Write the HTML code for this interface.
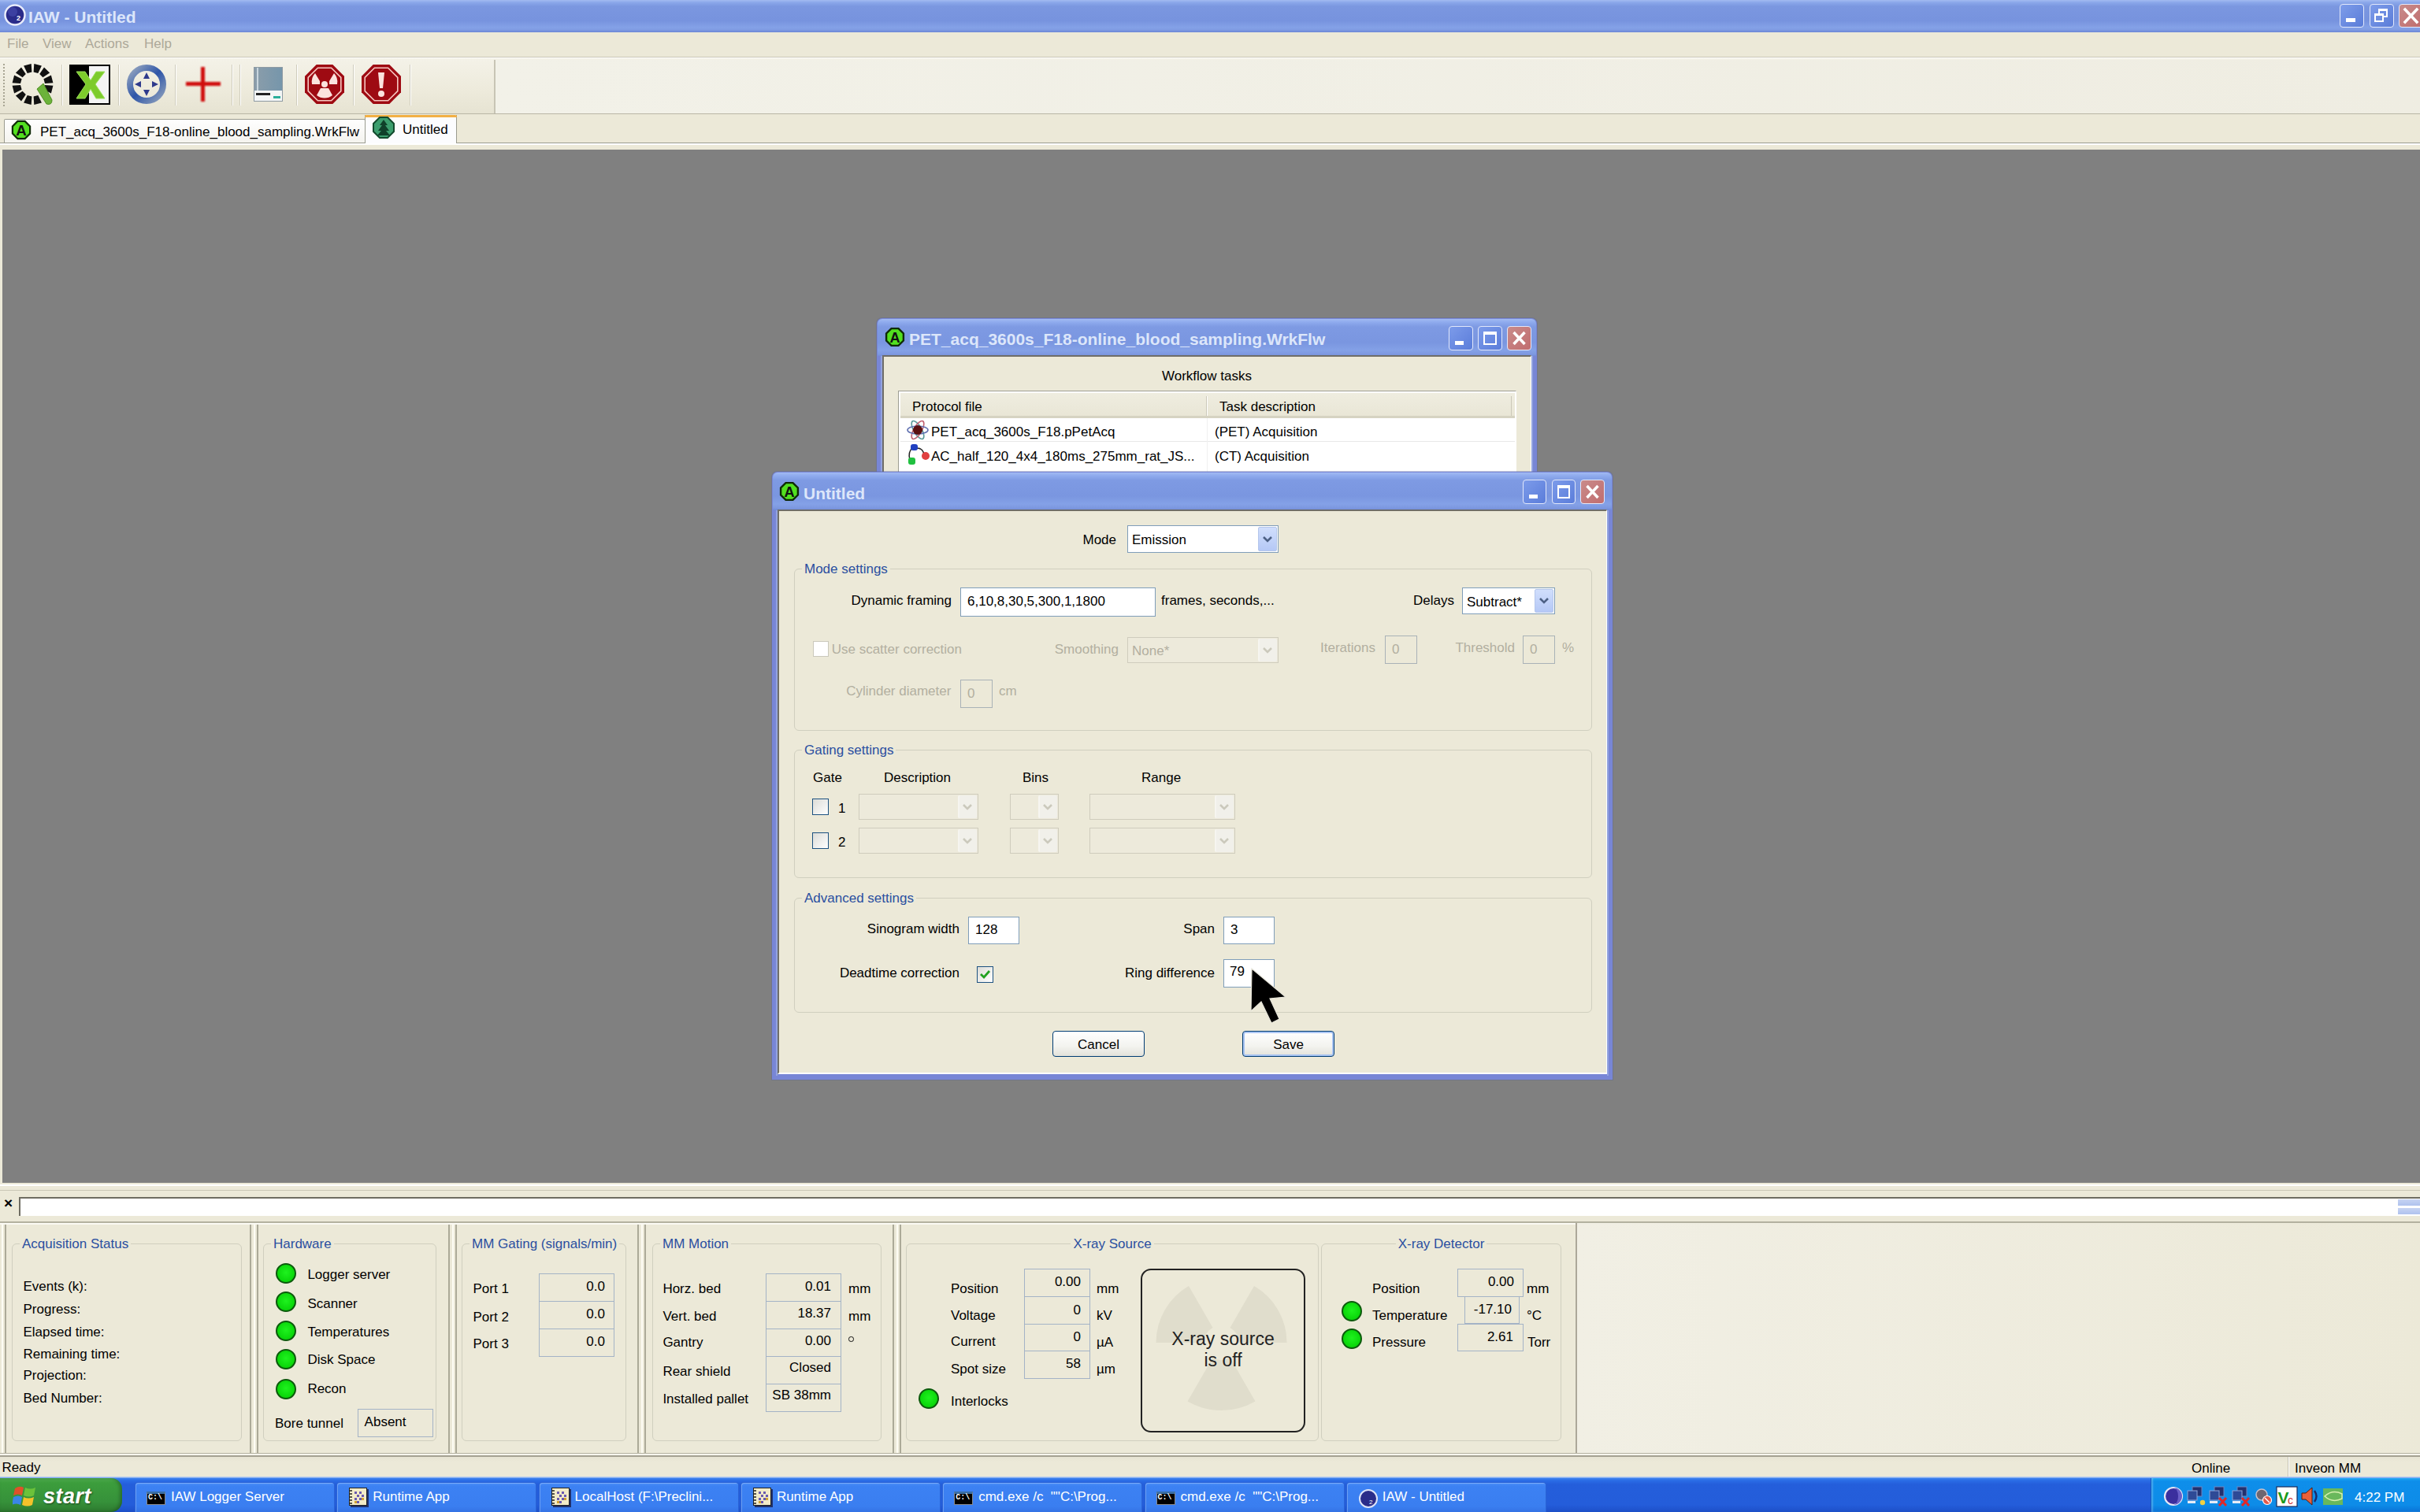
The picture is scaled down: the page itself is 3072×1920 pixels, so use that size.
<!DOCTYPE html><html><head><meta charset="utf-8"><title>IAW - Untitled</title><style>
html,body{margin:0;padding:0;width:3072px;height:1920px;overflow:hidden;background:#ECE9D8;}
body{position:relative;font-family:"Liberation Sans",sans-serif;}
.a{position:absolute;box-sizing:border-box;}
.t{position:absolute;white-space:nowrap;}
svg{position:absolute;}
</style></head><body>
<div class="a" style="left:0px;top:0px;width:3072px;height:41px;background:linear-gradient(#A3BBF1 0px,#8BA8EA 3px,#7B97E0 8px,#7793DE 26px,#84A1E7 35px,#7F9BE2 38px,#6B86D6 41px);"></div>
<svg style="left:4px;top:4px" width="30" height="30" viewBox="0 0 30 30"><circle cx="15" cy="15" r="12.5" fill="#2A2C8A" stroke="#E8ECFA" stroke-width="2.5"/><circle cx="12" cy="11" r="6" fill="#4A4FB0" opacity=".6"/><text x="17" y="22" font-size="9" fill="#fff" font-family="Liberation Sans" font-weight="bold">2</text></svg>
<div class="t" style="top:10.62px;font-size:21px;line-height:21px;color:#DCE6FA;font-weight:bold;left:36px;">IAW - Untitled</div>
<div class="a" style="left:2970px;top:5px;width:31px;height:30px;background:linear-gradient(135deg,#7E9DEA,#5A7CD8);border:1.5px solid #E4EAFB;border-radius:4px;"></div>
<div class="a" style="left:2978px;top:23px;width:12px;height:5px;background:#fff;"></div>
<div class="a" style="left:3008px;top:5px;width:31px;height:30px;background:linear-gradient(135deg,#7E9DEA,#5A7CD8);border:1.5px solid #E4EAFB;border-radius:4px;"></div>
<div class="a" style="left:3019px;top:11px;width:12px;height:11px;border:2px solid #fff;border-top-width:3px;"></div>
<div class="a" style="left:3014px;top:17px;width:12px;height:11px;border:2px solid #fff;border-top-width:3px;background:#6F8FE0;"></div>
<div class="a" style="left:3045px;top:5px;width:31px;height:30px;background:linear-gradient(135deg,#C88C8C,#C06C6C);border:1.5px solid #E4EAFB;border-radius:4px;"></div>
<svg style="left:3045px;top:5px" width="31" height="30" viewBox="0 0 31 30"><path d="M8 7 L23 23 M23 7 L8 23" stroke="#fff" stroke-width="3.5" stroke-linecap="square"/></svg>
<div class="a" style="left:0px;top:41px;width:3072px;height:33px;background:#ECE9D8;"></div>
<div class="t" style="top:46.61px;font-size:17px;line-height:17px;color:#ACA899;left:9px;">File</div>
<div class="t" style="top:46.61px;font-size:17px;line-height:17px;color:#ACA899;left:54px;">View</div>
<div class="t" style="top:46.61px;font-size:17px;line-height:17px;color:#ACA899;left:108px;">Actions</div>
<div class="t" style="top:46.61px;font-size:17px;line-height:17px;color:#ACA899;left:183px;">Help</div>
<div class="a" style="left:0px;top:72px;width:3072px;height:2px;background:#C9C6B6;border-bottom:1px solid #fff;"></div>
<div class="a" style="left:0px;top:74px;width:3072px;height:71px;background:linear-gradient(#F4F2E8,#EDEADB 60%,#E6E3D2);"></div>
<div class="a" style="left:628px;top:76px;width:2444px;height:68px;background:linear-gradient(90deg,#F2F1E8,#EFEDE2);"></div>
<div class="a" style="left:627px;top:76px;width:2px;height:68px;background:#C8C5B5;"></div>
<div class="a" style="left:4px;top:81px;width:2px;height:2px;background:#A8A593;"></div>
<div class="a" style="left:4px;top:85px;width:2px;height:2px;background:#A8A593;"></div>
<div class="a" style="left:4px;top:89px;width:2px;height:2px;background:#A8A593;"></div>
<div class="a" style="left:4px;top:93px;width:2px;height:2px;background:#A8A593;"></div>
<div class="a" style="left:4px;top:97px;width:2px;height:2px;background:#A8A593;"></div>
<div class="a" style="left:4px;top:101px;width:2px;height:2px;background:#A8A593;"></div>
<div class="a" style="left:4px;top:105px;width:2px;height:2px;background:#A8A593;"></div>
<div class="a" style="left:4px;top:109px;width:2px;height:2px;background:#A8A593;"></div>
<div class="a" style="left:4px;top:113px;width:2px;height:2px;background:#A8A593;"></div>
<div class="a" style="left:4px;top:117px;width:2px;height:2px;background:#A8A593;"></div>
<div class="a" style="left:4px;top:121px;width:2px;height:2px;background:#A8A593;"></div>
<div class="a" style="left:4px;top:125px;width:2px;height:2px;background:#A8A593;"></div>
<div class="a" style="left:4px;top:129px;width:2px;height:2px;background:#A8A593;"></div>
<div class="a" style="left:4px;top:133px;width:2px;height:2px;background:#A8A593;"></div>
<div class="a" style="left:78px;top:82px;width:1px;height:52px;background:#CFCCBC;"></div>
<div class="a" style="left:79px;top:82px;width:1px;height:52px;background:#fff;"></div>
<div class="a" style="left:150px;top:82px;width:1px;height:52px;background:#CFCCBC;"></div>
<div class="a" style="left:151px;top:82px;width:1px;height:52px;background:#fff;"></div>
<div class="a" style="left:222px;top:82px;width:1px;height:52px;background:#CFCCBC;"></div>
<div class="a" style="left:223px;top:82px;width:1px;height:52px;background:#fff;"></div>
<div class="a" style="left:294px;top:82px;width:1px;height:52px;background:#CFCCBC;"></div>
<div class="a" style="left:295px;top:82px;width:1px;height:52px;background:#fff;"></div>
<div class="a" style="left:304px;top:82px;width:1px;height:52px;background:#CFCCBC;"></div>
<div class="a" style="left:305px;top:82px;width:1px;height:52px;background:#fff;"></div>
<div class="a" style="left:376px;top:82px;width:1px;height:52px;background:#CFCCBC;"></div>
<div class="a" style="left:377px;top:82px;width:1px;height:52px;background:#fff;"></div>
<div class="a" style="left:448px;top:82px;width:1px;height:52px;background:#CFCCBC;"></div>
<div class="a" style="left:449px;top:82px;width:1px;height:52px;background:#fff;"></div>
<div class="a" style="left:520px;top:82px;width:1px;height:52px;background:#CFCCBC;"></div>
<div class="a" style="left:521px;top:82px;width:1px;height:52px;background:#fff;"></div>
<div class="a" style="left:0px;top:144px;width:3072px;height:1.5px;background:#B9B6A5;"></div>
<svg style="left:0;top:0" width="80" height="145"><path d="M43.3 81.1 L52.9 83.6 L48.3 93.1 L42.6 91.5Z M56.0 85.4 L63.1 92.5 L54.4 98.3 L50.2 94.1Z M64.9 95.6 L67.4 105.2 L57.0 105.9 L55.4 100.2Z M67.4 108.8 L64.9 118.4 L55.4 113.8 L57.0 108.1Z M52.9 130.4 L43.3 132.9 L42.6 122.5 L48.3 120.9Z M39.7 132.9 L30.1 130.4 L34.7 120.9 L40.4 122.5Z M27.0 128.6 L19.9 121.5 L28.6 115.7 L32.8 119.9Z M18.1 118.4 L15.6 108.8 L26.0 108.1 L27.6 113.8Z M15.6 105.2 L18.1 95.6 L27.6 100.2 L26.0 105.9Z M19.9 92.5 L27.0 85.4 L32.8 94.1 L28.6 98.3Z M30.1 83.6 L39.7 81.1 L40.4 91.5 L34.7 93.1Z" fill="#111"/><path d="M47 113 L55 106 L66 127 Q66 134 59 132 Z" fill="#6CB33A" stroke="#4E8E22" stroke-width="1"/></svg>
<div class="a" style="left:88px;top:82px;width:52px;height:51px;background:linear-gradient(90deg,#000 0,#000 48%,#F4F4F4 48%);border:2px solid #000;"></div>
<svg style="left:88px;top:82px" width="52" height="51"><path d="M9 9 L20 9 L27 20 L34 9 L45 9 L33 25 L45 43 L34 43 L27 31 L20 43 L9 43 L21 25 Z" fill="#7DCB2C" stroke="#9BE05A" stroke-width="1"/></svg>
<svg style="left:158px;top:80px" width="56" height="56"><defs><linearGradient id="cg" x1="0" y1="0" x2="1" y2="1"><stop offset="0" stop-color="#9AA9C0"/><stop offset=".5" stop-color="#2E55A8"/><stop offset="1" stop-color="#8EA0BC"/></linearGradient></defs><circle cx="28" cy="27" r="21" fill="none" stroke="url(#cg)" stroke-width="8"/><path d="M28 12 L32 20 L24 20 Z M28 42 L32 34 L24 34 Z M13 27 L21 23 L21 31 Z M43 27 L35 23 L35 31 Z" fill="#2E3A8C"/></svg>
<svg style="left:232px;top:82px" width="52" height="50"><defs><filter id="bl"><feGaussianBlur stdDeviation="1.2"/></filter></defs><g filter="url(#bl)"><rect x="4" y="22" width="44" height="5" fill="#D01010"/><rect x="23" y="3" width="5" height="44" fill="#D01010"/></g></svg>
<div class="a" style="left:322px;top:85px;width:37px;height:44px;background:linear-gradient(90deg,#8B9DAA,#7696AB);border:1px solid #8E9AA3;"></div>
<div class="a" style="left:326px;top:86px;width:2px;height:30px;background:#C9D6DE;"></div>
<div class="a" style="left:323px;top:115px;width:35px;height:13px;background:#F4F6F6;"></div>
<div class="a" style="left:325px;top:118px;width:18px;height:3px;background:#222;"></div>
<div class="a" style="left:347px;top:122px;width:9px;height:3px;background:#2AAE9A;"></div>
<svg style="left:386px;top:81px" width="52" height="52"><polygon points="51.0,36.3 36.3,51.0 15.7,51.0 1.0,36.3 1.0,15.7 15.7,1.0 36.3,1.0 51.0,15.7" fill="#9E0A12"/><polygon points="46.8,34.6 34.6,46.8 17.4,46.8 5.2,34.6 5.2,17.4 17.4,5.2 34.6,5.2 46.8,17.4" fill="none" stroke="#F6C6C0" stroke-width="1.6"/><circle cx="26" cy="26" r="4" fill="#FBE3DE"/><path d="M26 26 m-6 -4 L14 12 A16 16 0 0 0 10 26 L20 26 Z" fill="#FBE3DE"/><path d="M32 22 L38 12 A16 16 0 0 1 42 26 L32 26 Z" fill="#FBE3DE"/><path d="M21 31 L16 40 A16 16 0 0 0 36 40 L31 31 Z" fill="#FBE3DE"/></svg>
<svg style="left:458px;top:81px" width="52" height="52"><polygon points="51.0,36.3 36.3,51.0 15.7,51.0 1.0,36.3 1.0,15.7 15.7,1.0 36.3,1.0 51.0,15.7" fill="#9E0A12"/><polygon points="46.8,34.6 34.6,46.8 17.4,46.8 5.2,34.6 5.2,17.4 17.4,5.2 34.6,5.2 46.8,17.4" fill="none" stroke="#F6C6C0" stroke-width="1.6"/><path d="M22 11 L30 11 L28 31 L24 31 Z" fill="#FBE3DE"/><circle cx="26" cy="38" r="4" fill="#FBE3DE"/></svg>
<div class="a" style="left:0px;top:145px;width:3072px;height:46px;background:#ECE9D8;"></div>
<div class="a" style="left:5px;top:151px;width:459px;height:31px;background:linear-gradient(#FEFEFE,#F4F3EE);border:1px solid #9A9B8F;border-bottom:none;border-radius:2px 2px 0 0;"></div>
<div class="a" style="left:463px;top:146px;width:117px;height:37px;background:#FCFCFE;border:1px solid #9A9B8F;border-bottom:none;border-top:none;"></div>
<div class="a" style="left:463px;top:146px;width:117px;height:3px;background:#F2B045;border-radius:2px 2px 0 0;"></div>
<div class="a" style="left:0px;top:181px;width:463px;height:1px;background:#9A9B8F;"></div>
<div class="a" style="left:580px;top:181px;width:2492px;height:1px;background:#9A9B8F;"></div>
<div class="a" style="left:0px;top:182px;width:3072px;height:2px;background:#FFFFFF;"></div>
<div class="a" style="left:0px;top:184px;width:3072px;height:7px;background:#ECE9D8;"></div>
<svg style="left:14px;top:152px" width="26" height="26"><polygon points="24.1,17.6 17.6,24.1 8.4,24.1 1.9,17.6 1.9,8.4 8.4,1.9 17.6,1.9 24.1,8.4" fill="#52E020" stroke="#0E2A06" stroke-width="2.2"/><text x="13.0" y="20.0" font-size="18.7" font-weight="bold" text-anchor="middle" font-family="Liberation Sans" fill="#111">A</text></svg>
<div class="t" style="top:158.61px;font-size:17px;line-height:17px;color:#000;left:51px;">PET_acq_3600s_F18-online_blood_sampling.WrkFlw</div>
<svg style="left:473px;top:148px" width="28" height="28"><polygon points="9,1 19,1 27,9 27,19 19,27 9,27 1,19 1,9" fill="#3C9E6E" stroke="#134A2E" stroke-width="2"/><path d="M14 4 L19 11 L16 11 L21 18 L17 18 L22 24 L6 24 L11 18 L7 18 L12 11 L9 11 Z" fill="#10402A"/></svg>
<div class="t" style="top:155.61px;font-size:17px;line-height:17px;color:#000;left:511px;">Untitled</div>
<div class="a" style="left:3px;top:190px;width:3069px;height:1312px;background:#808080;"></div>
<div class="a" style="left:1113px;top:404px;width:838px;height:420px;background:#7886D6;border-radius:7px 7px 0 0;box-shadow:0 0 0 1px rgba(90,100,150,.35);"></div>
<div class="a" style="left:1114px;top:405px;width:836px;height:47px;border-radius:6px 6px 0 0;background:linear-gradient(#A2BAF2 0px,#8FABEE 4px,#7E9AE3 10px,#7A96E0 30px,#84A1E7 40px,#7D98E0 45px,#6E88D6 48px);"></div>
<div class="a" style="left:1118px;top:452px;width:2px;height:367px;background:#93A3DF;"></div>
<div class="a" style="left:1944px;top:452px;width:2px;height:367px;background:#93A3DF;"></div>
<div class="a" style="left:1120px;top:451px;width:824px;height:366px;background:#ECE9D8;border-top:2px solid #6F6E68;border-left:2px solid #6F6E68;border-right:1px solid #FFFFFF;border-bottom:2px solid #FFFFFF;"></div>
<svg style="left:1123px;top:415px" width="26" height="26"><polygon points="23.9,17.5 17.5,23.9 8.5,23.9 2.1,17.5 2.1,8.5 8.5,2.1 17.5,2.1 23.9,8.5" fill="#52E020" stroke="#0E2A06" stroke-width="2.4"/><text x="13.0" y="19.8" font-size="18.2" font-weight="bold" text-anchor="middle" font-family="Liberation Sans" fill="#111">A</text></svg>
<div class="t" style="top:420.22px;font-size:21px;line-height:21px;color:#DCE6FA;font-weight:bold;left:1154px;">PET_acq_3600s_F18-online_blood_sampling.WrkFlw</div>
<div class="a" style="left:1839px;top:414px;width:31px;height:31px;background:linear-gradient(135deg,#7C9BEA,#5B7DDA);border:1.5px solid #E2E8FA;border-radius:4px;"></div>
<div class="a" style="left:1847px;top:433px;width:11px;height:5px;background:#fff;"></div>
<div class="a" style="left:1876px;top:414px;width:31px;height:31px;background:linear-gradient(135deg,#7C9BEA,#5B7DDA);border:1.5px solid #E2E8FA;border-radius:4px;"></div>
<div class="a" style="left:1883px;top:421px;width:17px;height:17px;border:2px solid #fff;border-top-width:4px;"></div>
<div class="a" style="left:1913px;top:414px;width:31px;height:31px;background:linear-gradient(135deg,#C98B8A,#C16D6F);border:1.5px solid #E2E8FA;border-radius:4px;"></div>
<svg style="left:1913px;top:414px" width="31" height="31" viewBox="0 0 31 31"><path d="M8.5 8 L22.5 23 M22.5 8 L8.5 23" stroke="#fff" stroke-width="3.5"/></svg>
<div class="t" style="top:468.61px;font-size:17px;line-height:17px;color:#000;left:932px;width:1200px;text-align:center;">Workflow tasks</div>
<div class="a" style="left:1140px;top:496px;width:785px;height:200px;background:#fff;border:1px solid #9D9D92;border-right-color:#fff;"></div>
<div class="a" style="left:1143px;top:499px;width:780px;height:32px;background:linear-gradient(#EFEDE0,#E9E6D6);border-bottom:3px solid #D6D3C2;"></div>
<div class="a" style="left:1531px;top:503px;width:1px;height:25px;background:#CBC8B8;"></div>
<div class="a" style="left:1532px;top:503px;width:1px;height:25px;background:#fff;"></div>
<div class="a" style="left:1918px;top:503px;width:1px;height:25px;background:#CBC8B8;"></div>
<div class="t" style="top:507.61px;font-size:17px;line-height:17px;color:#000;left:1158px;">Protocol file</div>
<div class="t" style="top:507.61px;font-size:17px;line-height:17px;color:#000;left:1548px;">Task description</div>
<div class="a" style="left:1143px;top:560px;width:780px;height:1px;background:#E8E8E8;"></div>
<div class="a" style="left:1532px;top:531px;width:1px;height:70px;background:#F0F0F0;"></div>
<svg style="left:1150px;top:532px" width="30" height="28"><ellipse cx="15" cy="14" rx="13" ry="5" fill="none" stroke="#5A9A9A" stroke-width="1.6" transform="rotate(60 15 14)"/><ellipse cx="15" cy="14" rx="13" ry="5" fill="none" stroke="#C06070" stroke-width="1.6" transform="rotate(-60 15 14)"/><ellipse cx="15" cy="14" rx="13" ry="5" fill="none" stroke="#6070B0" stroke-width="1.6"/><circle cx="15" cy="14" r="6" fill="#5A1010"/></svg>
<div class="t" style="top:540.11px;font-size:17px;line-height:17px;color:#000;left:1182px;">PET_acq_3600s_F18.pPetAcq</div>
<div class="t" style="top:540.11px;font-size:17px;line-height:17px;color:#000;left:1542px;">(PET) Acquisition</div>
<svg style="left:1150px;top:562px" width="32" height="30"><path d="M9 6 Q2 12 5 22" fill="none" stroke="#222" stroke-width="1.5"/><path d="M12 7 Q22 6 23 16" fill="none" stroke="#222" stroke-width="1.5"/><rect x="6" y="2" width="9" height="8" rx="3" fill="#2040C0"/><circle cx="25" cy="17" r="5" fill="#E04040"/><rect x="3" y="19" width="9" height="9" rx="3" fill="#20C040"/></svg>
<div class="t" style="top:570.61px;font-size:17px;line-height:17px;color:#000;left:1182px;">AC_half_120_4x4_180ms_275mm_rat_JS...</div>
<div class="t" style="top:570.61px;font-size:17px;line-height:17px;color:#000;left:1542px;">(CT) Acquisition</div>
<div class="a" style="left:980px;top:599px;width:1067px;height:772px;background:#7886D6;border-radius:7px 7px 0 0;box-shadow:0 0 0 1px rgba(90,100,150,.35);"></div>
<div class="a" style="left:981px;top:600px;width:1065px;height:48px;border-radius:6px 6px 0 0;background:linear-gradient(#A2BAF2 0px,#8FABEE 4px,#7E9AE3 10px,#7A96E0 30px,#84A1E7 40px,#7D98E0 45px,#6E88D6 48px);"></div>
<div class="a" style="left:985px;top:648px;width:2px;height:718px;background:#93A3DF;"></div>
<div class="a" style="left:2040px;top:648px;width:2px;height:718px;background:#93A3DF;"></div>
<div class="a" style="left:987px;top:647px;width:1053px;height:717px;background:#ECE9D8;border-top:2px solid #6F6E68;border-left:2px solid #6F6E68;border-right:1px solid #FFFFFF;border-bottom:2px solid #FFFFFF;"></div>
<svg style="left:989px;top:611px" width="26" height="26"><polygon points="23.9,17.5 17.5,23.9 8.5,23.9 2.1,17.5 2.1,8.5 8.5,2.1 17.5,2.1 23.9,8.5" fill="#52E020" stroke="#0E2A06" stroke-width="2.4"/><text x="13.0" y="19.8" font-size="18.2" font-weight="bold" text-anchor="middle" font-family="Liberation Sans" fill="#111">A</text></svg>
<div class="t" style="top:615.72px;font-size:21px;line-height:21px;color:#DCE6FA;font-weight:bold;left:1020px;">Untitled</div>
<div class="a" style="left:1933px;top:609px;width:30px;height:31px;background:linear-gradient(135deg,#7C9BEA,#5B7DDA);border:1.5px solid #E2E8FA;border-radius:4px;"></div>
<div class="a" style="left:1941px;top:628px;width:11px;height:5px;background:#fff;"></div>
<div class="a" style="left:1970px;top:609px;width:30px;height:31px;background:linear-gradient(135deg,#7C9BEA,#5B7DDA);border:1.5px solid #E2E8FA;border-radius:4px;"></div>
<div class="a" style="left:1977px;top:616px;width:16px;height:17px;border:2px solid #fff;border-top-width:4px;"></div>
<div class="a" style="left:2006px;top:609px;width:31px;height:31px;background:linear-gradient(135deg,#C98B8A,#C16D6F);border:1.5px solid #E2E8FA;border-radius:4px;"></div>
<svg style="left:2006px;top:609px" width="31" height="31" viewBox="0 0 31 31"><path d="M8.5 8 L22.5 23 M22.5 8 L8.5 23" stroke="#fff" stroke-width="3.5"/></svg>
<div class="t" style="top:676.61px;font-size:17px;line-height:17px;color:#000;right:1655px;">Mode</div>
<div class="a" style="left:1431px;top:667px;width:192px;height:35px;background:#fff;border:1px solid #7F9DB9;"></div>
<div class="a" style="left:1597px;top:669px;width:24px;height:31px;background:linear-gradient(#D0DEFC,#B5C8F6);border:1px solid #B4C6EC;border-radius:2px;"></div>
<svg style="left:1602px;top:679.5px" width="14" height="10"><path d="M2 2 L7 7 L12 2" fill="none" stroke="#4D6185" stroke-width="2.6"/></svg>
<div class="t" style="top:677.11px;font-size:17px;line-height:17px;color:#000;left:1437px;">Emission</div>
<div class="a" style="left:1008px;top:722px;width:1013px;height:206px;border:1px solid #D0CFBF;border-radius:6px;"></div>
<div class="a" style="left:1018px;top:719px;width:111.8125px;height:6px;background:#ECE9D8;"></div>
<div class="t" style="top:714.11px;font-size:17px;line-height:17px;color:#2A4FA0;left:1021px;">Mode settings</div>
<div class="t" style="top:754.01px;font-size:17px;line-height:17px;color:#000;right:1864px;">Dynamic framing</div>
<div class="a" style="left:1219px;top:746px;width:248px;height:37px;background:#fff;border:1px solid #7F9DB9;"></div>
<div class="t" style="top:755.11px;font-size:17px;line-height:17px;color:#000;left:1228px;">6,10,8,30,5,300,1,1800</div>
<div class="t" style="top:754.01px;font-size:17px;line-height:17px;color:#000;left:1474px;">frames, seconds,...</div>
<div class="t" style="top:753.61px;font-size:17px;line-height:17px;color:#000;right:1226px;">Delays</div>
<div class="a" style="left:1856px;top:746px;width:118px;height:34px;background:#fff;border:1px solid #7F9DB9;"></div>
<div class="a" style="left:1948px;top:748px;width:24px;height:30px;background:linear-gradient(#D0DEFC,#B5C8F6);border:1px solid #B4C6EC;border-radius:2px;"></div>
<svg style="left:1953px;top:758.0px" width="14" height="10"><path d="M2 2 L7 7 L12 2" fill="none" stroke="#4D6185" stroke-width="2.6"/></svg>
<div class="t" style="top:755.61px;font-size:17px;line-height:17px;color:#000;left:1862px;">Subtract*</div>
<div class="a" style="left:1032px;top:814px;width:20px;height:20px;background:#fff;border:1px solid #CAC8BB;"></div>
<div class="t" style="top:816.41px;font-size:17px;line-height:17px;color:#B2AFA0;left:1055.7px;">Use scatter correction</div>
<div class="t" style="top:815.61px;font-size:17px;line-height:17px;color:#B2AFA0;right:1652px;">Smoothing</div>
<div class="a" style="left:1431px;top:809px;width:192px;height:33px;background:#EDEADB;border:1px solid #CFCCBD;"></div>
<div class="a" style="left:1597px;top:811px;width:24px;height:29px;background:#F1F0EA;border-left:2px solid #F6F5F0;border-radius:2px;"></div>
<svg style="left:1602px;top:820.5px" width="14" height="10"><path d="M2 2 L7 7 L12 2" fill="none" stroke="#CBC9BC" stroke-width="2.6"/></svg>
<div class="t" style="top:818.11px;font-size:17px;line-height:17px;color:#B2AFA0;left:1437px;">None*</div>
<div class="t" style="top:814.21px;font-size:17px;line-height:17px;color:#B2AFA0;right:1326px;">Iterations</div>
<div class="a" style="left:1758px;top:807px;width:41px;height:36px;background:#ECE9D8;border:1px solid #A9B2B7;"></div>
<div class="t" style="top:816.11px;font-size:17px;line-height:17px;color:#B2AFA0;left:1767px;">0</div>
<div class="t" style="top:814.21px;font-size:17px;line-height:17px;color:#B2AFA0;right:1149px;">Threshold</div>
<div class="a" style="left:1933px;top:807px;width:41px;height:36px;background:#ECE9D8;border:1px solid #A9B2B7;"></div>
<div class="t" style="top:816.11px;font-size:17px;line-height:17px;color:#B2AFA0;left:1942px;">0</div>
<div class="t" style="top:814.21px;font-size:17px;line-height:17px;color:#B2AFA0;left:1983px;">%</div>
<div class="t" style="top:869.21px;font-size:17px;line-height:17px;color:#B2AFA0;right:1864.6px;">Cylinder diameter</div>
<div class="a" style="left:1219px;top:863px;width:41px;height:36px;background:#ECE9D8;border:1px solid #A9B2B7;"></div>
<div class="t" style="top:872.11px;font-size:17px;line-height:17px;color:#B2AFA0;left:1228px;">0</div>
<div class="t" style="top:869.21px;font-size:17px;line-height:17px;color:#B2AFA0;left:1268px;">cm</div>
<div class="a" style="left:1008px;top:952px;width:1013px;height:163px;border:1px solid #D0CFBF;border-radius:6px;"></div>
<div class="a" style="left:1018px;top:949px;width:119.375px;height:6px;background:#ECE9D8;"></div>
<div class="t" style="top:944.11px;font-size:17px;line-height:17px;color:#2A4FA0;left:1021px;">Gating settings</div>
<div class="t" style="top:979.01px;font-size:17px;line-height:17px;color:#000;left:1032px;">Gate</div>
<div class="t" style="top:979.01px;font-size:17px;line-height:17px;color:#000;left:1122px;">Description</div>
<div class="t" style="top:979.01px;font-size:17px;line-height:17px;color:#000;left:1298px;">Bins</div>
<div class="t" style="top:979.01px;font-size:17px;line-height:17px;color:#000;left:1449px;">Range</div>
<div class="a" style="left:1031px;top:1014px;width:21px;height:21px;background:linear-gradient(135deg,#DCDCD7,#fff);border:1px solid #1C5180;"></div>
<div class="t" style="top:1017.61px;font-size:17px;line-height:17px;color:#000;left:1064px;">1</div>
<div class="a" style="left:1090px;top:1008px;width:152px;height:33px;background:#EDEADB;border:1px solid #CFCCBD;"></div>
<div class="a" style="left:1216px;top:1010px;width:24px;height:29px;background:#F1F0EA;border-left:2px solid #F6F5F0;border-radius:2px;"></div>
<svg style="left:1221px;top:1019.5px" width="14" height="10"><path d="M2 2 L7 7 L12 2" fill="none" stroke="#CBC9BC" stroke-width="2.6"/></svg>
<div class="a" style="left:1282px;top:1008px;width:62px;height:33px;background:#EDEADB;border:1px solid #CFCCBD;"></div>
<div class="a" style="left:1318px;top:1010px;width:24px;height:29px;background:#F1F0EA;border-left:2px solid #F6F5F0;border-radius:2px;"></div>
<svg style="left:1323px;top:1019.5px" width="14" height="10"><path d="M2 2 L7 7 L12 2" fill="none" stroke="#CBC9BC" stroke-width="2.6"/></svg>
<div class="a" style="left:1383px;top:1008px;width:185px;height:33px;background:#EDEADB;border:1px solid #CFCCBD;"></div>
<div class="a" style="left:1542px;top:1010px;width:24px;height:29px;background:#F1F0EA;border-left:2px solid #F6F5F0;border-radius:2px;"></div>
<svg style="left:1547px;top:1019.5px" width="14" height="10"><path d="M2 2 L7 7 L12 2" fill="none" stroke="#CBC9BC" stroke-width="2.6"/></svg>
<div class="a" style="left:1031px;top:1057px;width:21px;height:21px;background:linear-gradient(135deg,#DCDCD7,#fff);border:1px solid #1C5180;"></div>
<div class="t" style="top:1060.61px;font-size:17px;line-height:17px;color:#000;left:1064px;">2</div>
<div class="a" style="left:1090px;top:1051px;width:152px;height:33px;background:#EDEADB;border:1px solid #CFCCBD;"></div>
<div class="a" style="left:1216px;top:1053px;width:24px;height:29px;background:#F1F0EA;border-left:2px solid #F6F5F0;border-radius:2px;"></div>
<svg style="left:1221px;top:1062.5px" width="14" height="10"><path d="M2 2 L7 7 L12 2" fill="none" stroke="#CBC9BC" stroke-width="2.6"/></svg>
<div class="a" style="left:1282px;top:1051px;width:62px;height:33px;background:#EDEADB;border:1px solid #CFCCBD;"></div>
<div class="a" style="left:1318px;top:1053px;width:24px;height:29px;background:#F1F0EA;border-left:2px solid #F6F5F0;border-radius:2px;"></div>
<svg style="left:1323px;top:1062.5px" width="14" height="10"><path d="M2 2 L7 7 L12 2" fill="none" stroke="#CBC9BC" stroke-width="2.6"/></svg>
<div class="a" style="left:1383px;top:1051px;width:185px;height:33px;background:#EDEADB;border:1px solid #CFCCBD;"></div>
<div class="a" style="left:1542px;top:1053px;width:24px;height:29px;background:#F1F0EA;border-left:2px solid #F6F5F0;border-radius:2px;"></div>
<svg style="left:1547px;top:1062.5px" width="14" height="10"><path d="M2 2 L7 7 L12 2" fill="none" stroke="#CBC9BC" stroke-width="2.6"/></svg>
<div class="a" style="left:1008px;top:1140px;width:1013px;height:146px;border:1px solid #D0CFBF;border-radius:6px;"></div>
<div class="a" style="left:1018px;top:1137px;width:144.90625px;height:6px;background:#ECE9D8;"></div>
<div class="t" style="top:1132.11px;font-size:17px;line-height:17px;color:#2A4FA0;left:1021px;">Advanced settings</div>
<div class="t" style="top:1171.01px;font-size:17px;line-height:17px;color:#000;right:1854px;">Sinogram width</div>
<div class="a" style="left:1229px;top:1164px;width:65px;height:35px;background:#fff;border:1px solid #7F9DB9;"></div>
<div class="t" style="top:1172.11px;font-size:17px;line-height:17px;color:#000;left:1238px;">128</div>
<div class="t" style="top:1171.01px;font-size:17px;line-height:17px;color:#000;right:1530px;">Span</div>
<div class="a" style="left:1553px;top:1164px;width:65px;height:35px;background:#fff;border:1px solid #7F9DB9;"></div>
<div class="t" style="top:1172.11px;font-size:17px;line-height:17px;color:#000;left:1562px;">3</div>
<div class="t" style="top:1226.61px;font-size:17px;line-height:17px;color:#000;right:1854px;">Deadtime correction</div>
<div class="a" style="left:1240px;top:1227px;width:21px;height:21px;background:linear-gradient(135deg,#DCDCD7,#fff);border:1px solid #1C5180;"></div>
<svg style="left:1240px;top:1227px" width="21" height="21"><path d="M5 10 L9 14 L16 6" fill="none" stroke="#21A121" stroke-width="2.8"/></svg>
<div class="t" style="top:1226.61px;font-size:17px;line-height:17px;color:#000;right:1530px;">Ring difference</div>
<div class="a" style="left:1553px;top:1218px;width:65px;height:36px;background:#fff;border:1px solid #7F9DB9;"></div>
<div class="t" style="top:1225.11px;font-size:17px;line-height:17px;color:#000;left:1561px;">79</div>
<div class="a" style="left:1336px;top:1309px;width:117px;height:33px;background:linear-gradient(#FFFFFF,#F3F3EF 60%,#E3E2DA);border:1px solid #003C74;border-radius:4px;"></div>
<div class="t" style="top:1317.61px;font-size:17px;line-height:17px;color:#000;left:794.5px;width:1200px;text-align:center;">Cancel</div>
<div class="a" style="left:1577px;top:1309px;width:117px;height:33px;background:linear-gradient(#FFFFFF,#F3F3EF 60%,#E3E2DA);border:1px solid #003C74;border-radius:4px;box-shadow:inset 0 0 0 2px #A9C4F2;"></div>
<div class="t" style="top:1317.61px;font-size:17px;line-height:17px;color:#000;left:1035.5px;width:1200px;text-align:center;">Save</div>
<svg style="left:1580px;top:1222px" width="60" height="84"><path d="M9 8 L8 62 L21 50 L34 77 L44 72 L32 46 L52 44 Z" fill="#000" stroke="#E8E6DA" stroke-width="1.2"/></svg>
<div class="a" style="left:0px;top:1502px;width:3072px;height:346px;background:#ECE9D8;"></div>
<div class="a" style="left:0px;top:1504px;width:3072px;height:2px;background:#FFFFFF;"></div>
<div class="a" style="left:0px;top:1511px;width:3072px;height:1px;background:#C9C6B5;"></div>
<div class="t" style="left:5px;top:1517.5px;font-size:19px;line-height:19px;font-weight:bold;color:#000">&#215;</div>
<div class="a" style="left:24px;top:1520px;width:3048px;height:24px;background:#fff;border-top:2px solid #6F6D62;border-left:2px solid #6F6D62;"></div>
<div class="a" style="left:3044px;top:1523px;width:28px;height:8px;background:linear-gradient(#C7D4F3,#AFC2EE);"></div>
<div class="a" style="left:3044px;top:1534px;width:28px;height:8px;background:linear-gradient(#C7D4F3,#AFC2EE);"></div>
<div class="a" style="left:0px;top:1551px;width:3072px;height:2px;background:#B3B19F;"></div>
<div class="a" style="left:0px;top:1553px;width:3072px;height:2px;background:#FBFAF4;"></div>
<div class="a" style="left:316.5px;top:1555px;width:2px;height:290px;background:#ACAA98;"></div>
<div class="a" style="left:322px;top:1555px;width:2px;height:290px;background:#FDFCF4;"></div>
<div class="a" style="left:326px;top:1555px;width:2px;height:290px;background:#ACAA98;"></div>
<div class="a" style="left:568.5px;top:1555px;width:2px;height:290px;background:#ACAA98;"></div>
<div class="a" style="left:574px;top:1555px;width:2px;height:290px;background:#FDFCF4;"></div>
<div class="a" style="left:578px;top:1555px;width:2px;height:290px;background:#ACAA98;"></div>
<div class="a" style="left:808.5px;top:1555px;width:2px;height:290px;background:#ACAA98;"></div>
<div class="a" style="left:814px;top:1555px;width:2px;height:290px;background:#FDFCF4;"></div>
<div class="a" style="left:818px;top:1555px;width:2px;height:290px;background:#ACAA98;"></div>
<div class="a" style="left:1132.5px;top:1555px;width:2px;height:290px;background:#ACAA98;"></div>
<div class="a" style="left:1138px;top:1555px;width:2px;height:290px;background:#FDFCF4;"></div>
<div class="a" style="left:1142px;top:1555px;width:2px;height:290px;background:#ACAA98;"></div>
<div class="a" style="left:2px;top:1555px;width:2px;height:290px;background:#FDFCF4;"></div>
<div class="a" style="left:6px;top:1555px;width:2px;height:290px;background:#ACAA98;"></div>
<div class="a" style="left:2000px;top:1553px;width:2px;height:292px;background:#ACA899;"></div>
<div class="a" style="left:2002px;top:1553px;width:1070px;height:292px;background:linear-gradient(90deg,#F1EFE4,#ECE9D8);"></div>
<div class="a" style="left:0px;top:1844.5px;width:3072px;height:1.5px;background:#B5B2A2;"></div>
<div class="a" style="left:0px;top:1846px;width:3072px;height:2px;background:#F7F6EE;"></div>
<div class="a" style="left:0px;top:1848px;width:3072px;height:2px;background:#A4A192;"></div>
<div class="a" style="left:15px;top:1579px;width:292px;height:251px;border:1px solid #D0CFBF;border-radius:6px;"></div>
<div class="a" style="left:25px;top:1576px;width:141.125px;height:6px;background:#ECE9D8;"></div>
<div class="t" style="top:1571.11px;font-size:17px;line-height:17px;color:#2A4FA0;left:28px;">Acquisition Status</div>
<div class="t" style="top:1624.61px;font-size:17px;line-height:17px;color:#000;left:29.5px;">Events (k):</div>
<div class="t" style="top:1653.61px;font-size:17px;line-height:17px;color:#000;left:29.5px;">Progress:</div>
<div class="t" style="top:1682.61px;font-size:17px;line-height:17px;color:#000;left:29.5px;">Elapsed time:</div>
<div class="t" style="top:1711.31px;font-size:17px;line-height:17px;color:#000;left:29.5px;">Remaining time:</div>
<div class="t" style="top:1738.41px;font-size:17px;line-height:17px;color:#000;left:29.5px;">Projection:</div>
<div class="t" style="top:1767.21px;font-size:17px;line-height:17px;color:#000;left:29.5px;">Bed Number:</div>
<div class="a" style="left:334px;top:1579px;width:220px;height:251px;border:1px solid #D0CFBF;border-radius:6px;"></div>
<div class="a" style="left:344px;top:1576px;width:79.6875px;height:6px;background:#ECE9D8;"></div>
<div class="t" style="top:1571.11px;font-size:17px;line-height:17px;color:#2A4FA0;left:347px;">Hardware</div>
<div class="a" style="left:349.6px;top:1604px;width:26px;height:26px;background:radial-gradient(circle at 50% 45%,#1EF21E,#0AD60A 70%);border:2px solid #0C5A0C;border-radius:50%;"></div>
<div class="t" style="top:1609.61px;font-size:17px;line-height:17px;color:#000;left:390.4px;">Logger server</div>
<div class="a" style="left:349.6px;top:1640px;width:26px;height:26px;background:radial-gradient(circle at 50% 45%,#1EF21E,#0AD60A 70%);border:2px solid #0C5A0C;border-radius:50%;"></div>
<div class="t" style="top:1646.61px;font-size:17px;line-height:17px;color:#000;left:390.4px;">Scanner</div>
<div class="a" style="left:349.6px;top:1677px;width:26px;height:26px;background:radial-gradient(circle at 50% 45%,#1EF21E,#0AD60A 70%);border:2px solid #0C5A0C;border-radius:50%;"></div>
<div class="t" style="top:1682.61px;font-size:17px;line-height:17px;color:#000;left:390.4px;">Temperatures</div>
<div class="a" style="left:349.6px;top:1713px;width:26px;height:26px;background:radial-gradient(circle at 50% 45%,#1EF21E,#0AD60A 70%);border:2px solid #0C5A0C;border-radius:50%;"></div>
<div class="t" style="top:1718.11px;font-size:17px;line-height:17px;color:#000;left:390.4px;">Disk Space</div>
<div class="a" style="left:349.6px;top:1751px;width:26px;height:26px;background:radial-gradient(circle at 50% 45%,#1EF21E,#0AD60A 70%);border:2px solid #0C5A0C;border-radius:50%;"></div>
<div class="t" style="top:1755.31px;font-size:17px;line-height:17px;color:#000;left:390.4px;">Recon</div>
<div class="t" style="top:1799.41px;font-size:17px;line-height:17px;color:#000;left:349px;">Bore tunnel</div>
<div class="a" style="left:454px;top:1789px;width:96px;height:36px;background:#ECE9D8;border:1.5px solid #A4B3C6;"></div>
<div class="t" style="top:1797.01px;font-size:17px;line-height:17px;color:#000;left:462.6px;">Absent</div>
<div class="a" style="left:586px;top:1579px;width:209px;height:251px;border:1px solid #D0CFBF;border-radius:6px;"></div>
<div class="a" style="left:596px;top:1576px;width:190.171875px;height:6px;background:#ECE9D8;"></div>
<div class="t" style="top:1571.11px;font-size:17px;line-height:17px;color:#2A4FA0;left:599px;">MM Gating (signals/min)</div>
<div class="t" style="top:1628.31px;font-size:17px;line-height:17px;color:#000;left:600.5px;">Port 1</div>
<div class="t" style="top:1663.61px;font-size:17px;line-height:17px;color:#000;left:600.5px;">Port 2</div>
<div class="t" style="top:1697.61px;font-size:17px;line-height:17px;color:#000;left:600.5px;">Port 3</div>
<div class="a" style="left:684px;top:1617px;width:96px;height:36px;background:#ECE9D8;border:1.5px solid #A4B3C6;"></div>
<div class="t" style="top:1624.61px;font-size:17px;line-height:17px;color:#000;right:2304px;">0.0</div>
<div class="a" style="left:684px;top:1652px;width:96px;height:36px;background:#ECE9D8;border:1.5px solid #A4B3C6;"></div>
<div class="t" style="top:1659.61px;font-size:17px;line-height:17px;color:#000;right:2304px;">0.0</div>
<div class="a" style="left:684px;top:1687px;width:96px;height:36px;background:#ECE9D8;border:1.5px solid #A4B3C6;"></div>
<div class="t" style="top:1694.61px;font-size:17px;line-height:17px;color:#000;right:2304px;">0.0</div>
<div class="a" style="left:828px;top:1579px;width:291px;height:251px;border:1px solid #D0CFBF;border-radius:6px;"></div>
<div class="a" style="left:838px;top:1576px;width:90.046875px;height:6px;background:#ECE9D8;"></div>
<div class="t" style="top:1571.11px;font-size:17px;line-height:17px;color:#2A4FA0;left:841px;">MM Motion</div>
<div class="t" style="top:1628.11px;font-size:17px;line-height:17px;color:#000;left:841.4px;">Horz. bed</div>
<div class="t" style="top:1662.61px;font-size:17px;line-height:17px;color:#000;left:841.4px;">Vert. bed</div>
<div class="t" style="top:1696.21px;font-size:17px;line-height:17px;color:#000;left:841.4px;">Gantry</div>
<div class="t" style="top:1733.41px;font-size:17px;line-height:17px;color:#000;left:841.4px;">Rear shield</div>
<div class="t" style="top:1767.61px;font-size:17px;line-height:17px;color:#000;left:841.4px;">Installed pallet</div>
<div class="a" style="left:972px;top:1617px;width:96px;height:36px;background:#ECE9D8;border:1.5px solid #A4B3C6;"></div>
<div class="t" style="top:1624.61px;font-size:17px;line-height:17px;color:#000;right:2017px;">0.01</div>
<div class="a" style="left:972px;top:1652px;width:96px;height:36px;background:#ECE9D8;border:1.5px solid #A4B3C6;"></div>
<div class="t" style="top:1659.11px;font-size:17px;line-height:17px;color:#000;right:2017px;">18.37</div>
<div class="a" style="left:972px;top:1687px;width:96px;height:36px;background:#ECE9D8;border:1.5px solid #A4B3C6;"></div>
<div class="t" style="top:1693.61px;font-size:17px;line-height:17px;color:#000;right:2017px;">0.00</div>
<div class="a" style="left:972px;top:1722px;width:96px;height:36px;background:#ECE9D8;border:1.5px solid #A4B3C6;"></div>
<div class="t" style="top:1728.11px;font-size:17px;line-height:17px;color:#000;right:2017px;">Closed</div>
<div class="a" style="left:972px;top:1757px;width:96px;height:36px;background:#ECE9D8;border:1.5px solid #A4B3C6;"></div>
<div class="t" style="top:1762.61px;font-size:17px;line-height:17px;color:#000;right:2017px;">SB 38mm</div>
<div class="t" style="top:1627.61px;font-size:17px;line-height:17px;color:#000;left:1077px;">mm</div>
<div class="t" style="top:1662.61px;font-size:17px;line-height:17px;color:#000;left:1077px;">mm</div>
<div class="a" style="left:1077px;top:1697px;width:6.5px;height:6.5px;border:1.6px solid #111;border-radius:50%;"></div>
<div class="a" style="left:1150px;top:1579px;width:524px;height:251px;border:1px solid #D0CFBF;border-radius:6px;"></div>
<div class="a" style="left:1359.40625px;top:1576px;width:105.1875px;height:6px;background:#ECE9D8;"></div>
<div class="t" style="top:1571.11px;font-size:17px;line-height:17px;color:#2A4FA0;left:1362.40625px;">X-ray Source</div>
<div class="t" style="top:1628.11px;font-size:17px;line-height:17px;color:#000;left:1207px;">Position</div>
<div class="t" style="top:1661.61px;font-size:17px;line-height:17px;color:#000;left:1207px;">Voltage</div>
<div class="t" style="top:1695.41px;font-size:17px;line-height:17px;color:#000;left:1207px;">Current</div>
<div class="t" style="top:1729.61px;font-size:17px;line-height:17px;color:#000;left:1207px;">Spot size</div>
<div class="a" style="left:1300px;top:1611px;width:84px;height:36px;background:#ECE9D8;border:1.5px solid #A4B3C6;"></div>
<div class="t" style="top:1618.61px;font-size:17px;line-height:17px;color:#000;right:1700px;">0.00</div>
<div class="a" style="left:1300px;top:1646px;width:84px;height:36px;background:#ECE9D8;border:1.5px solid #A4B3C6;"></div>
<div class="t" style="top:1655.21px;font-size:17px;line-height:17px;color:#000;right:1700px;">0</div>
<div class="a" style="left:1300px;top:1681px;width:84px;height:36px;background:#ECE9D8;border:1.5px solid #A4B3C6;"></div>
<div class="t" style="top:1688.61px;font-size:17px;line-height:17px;color:#000;right:1700px;">0</div>
<div class="a" style="left:1300px;top:1715px;width:84px;height:36px;background:#ECE9D8;border:1.5px solid #A4B3C6;"></div>
<div class="t" style="top:1722.61px;font-size:17px;line-height:17px;color:#000;right:1700px;">58</div>
<div class="t" style="top:1627.61px;font-size:17px;line-height:17px;color:#000;left:1392px;">mm</div>
<div class="t" style="top:1661.61px;font-size:17px;line-height:17px;color:#000;left:1392px;">kV</div>
<div class="t" style="top:1695.61px;font-size:17px;line-height:17px;color:#000;left:1392px;">&micro;A</div>
<div class="t" style="top:1729.61px;font-size:17px;line-height:17px;color:#000;left:1392px;">&micro;m</div>
<div class="a" style="left:1165.7px;top:1762.6px;width:26px;height:26px;background:radial-gradient(circle at 50% 45%,#1EF21E,#0AD60A 70%);border:2px solid #0C5A0C;border-radius:50%;"></div>
<div class="t" style="top:1771.31px;font-size:17px;line-height:17px;color:#000;left:1207px;">Interlocks</div>
<div class="a" style="left:1448px;top:1611px;width:209px;height:208px;border:2.5px solid #222;border-radius:13px;background:#ECE9D8;"></div>
<svg style="left:1448px;top:1611px" width="209" height="208"><g fill="#E0DDCC"><path d="M80.5 94.0 L19.5 94.0 A83 83 0 0 1 61.0 22.1 L91.5 74.9 A22 22 0 0 0 80.5 94.0Z"/><path d="M113.5 74.9 L144.0 22.1 A83 83 0 0 1 185.5 94.0 L124.5 94.0 A22 22 0 0 0 113.5 74.9Z"/><path d="M113.5 113.1 L145.5 168.5 A86 86 0 0 1 59.5 168.5 L91.5 113.1 A22 22 0 0 0 113.5 113.1Z"/></g></svg>
<div class="t" style="top:1689.23px;font-size:23px;line-height:23px;color:#222;left:952.5px;width:1200px;text-align:center;">X-ray source</div>
<div class="t" style="top:1716.43px;font-size:23px;line-height:23px;color:#222;left:952.5px;width:1200px;text-align:center;">is off</div>
<div class="a" style="left:1677px;top:1579px;width:305px;height:251px;border:1px solid #D0CFBF;border-radius:6px;"></div>
<div class="a" style="left:1771.71875px;top:1576px;width:115.5625px;height:6px;background:#ECE9D8;"></div>
<div class="t" style="top:1571.11px;font-size:17px;line-height:17px;color:#2A4FA0;left:1774.71875px;">X-ray Detector</div>
<div class="t" style="top:1628.11px;font-size:17px;line-height:17px;color:#000;left:1742px;">Position</div>
<div class="t" style="top:1661.61px;font-size:17px;line-height:17px;color:#000;left:1742px;">Temperature</div>
<div class="t" style="top:1695.61px;font-size:17px;line-height:17px;color:#000;left:1742px;">Pressure</div>
<div class="a" style="left:1703px;top:1652px;width:26px;height:26px;background:radial-gradient(circle at 50% 45%,#1EF21E,#0AD60A 70%);border:2px solid #0C5A0C;border-radius:50%;"></div>
<div class="a" style="left:1703px;top:1687px;width:26px;height:26px;background:radial-gradient(circle at 50% 45%,#1EF21E,#0AD60A 70%);border:2px solid #0C5A0C;border-radius:50%;"></div>
<div class="a" style="left:1850px;top:1611px;width:84px;height:36px;background:#ECE9D8;border:1.5px solid #A4B3C6;"></div>
<div class="t" style="top:1618.61px;font-size:17px;line-height:17px;color:#000;right:1150px;">0.00</div>
<div class="a" style="left:1859px;top:1646px;width:70px;height:35px;background:#ECE9D8;border:1.5px solid #A4B3C6;"></div>
<div class="t" style="top:1653.61px;font-size:17px;line-height:17px;color:#000;right:1153px;">-17.10</div>
<div class="a" style="left:1850px;top:1681px;width:84px;height:35px;background:#ECE9D8;border:1.5px solid #A4B3C6;"></div>
<div class="t" style="top:1688.61px;font-size:17px;line-height:17px;color:#000;right:1151px;">2.61</div>
<div class="t" style="top:1627.61px;font-size:17px;line-height:17px;color:#000;left:1938px;">mm</div>
<div class="t" style="top:1661.61px;font-size:17px;line-height:17px;color:#000;left:1938px;">&deg;C</div>
<div class="t" style="top:1695.61px;font-size:17px;line-height:17px;color:#000;left:1939px;">Torr</div>
<div class="a" style="left:0px;top:1850px;width:3072px;height:27px;background:linear-gradient(#E6E3D3,#ECE9D8 6px);"></div>
<div class="t" style="top:1855.31px;font-size:17px;line-height:17px;color:#000;left:2.4px;">Ready</div>
<div class="t" style="top:1855.51px;font-size:17px;line-height:17px;color:#000;left:2782px;">Online</div>
<div class="a" style="left:2904px;top:1850px;width:1px;height:26px;background:#C5C2B2;"></div>
<div class="a" style="left:2905px;top:1850px;width:1px;height:26px;background:#fff;"></div>
<div class="t" style="top:1855.51px;font-size:17px;line-height:17px;color:#000;left:2913px;">Inveon MM</div>
<div class="a" style="left:0px;top:1877px;width:3072px;height:43px;background:linear-gradient(#3B82F0 0px,#2A6CE6 3px,#245EDB 8px,#245DDA 34px,#1D4FC8 43px);"></div>
<div class="a" style="left:0px;top:1875px;width:3072px;height:2px;background:linear-gradient(#C9DBF5,#6C9BEA);"></div>
<div class="a" style="left:0px;top:1877px;width:155px;height:43px;background:linear-gradient(#4FAE4F 0px,#3C9D3C 6px,#36913A 30px,#2D7A2F 43px);border-radius:0 14px 14px 0;box-shadow:inset -3px 0 4px rgba(0,0,0,.25);"></div>
<svg style="left:16px;top:1885px" width="32" height="30"><path d="M3 5 Q9 1 14 4 L12 14 Q7 11 1 14 Z" fill="#E0502A"/><path d="M16 4 Q22 7 29 4 L27 14 Q21 17 14 14 Z" fill="#6CC23A"/><path d="M1 16 Q7 13 12 16 L10 26 Q5 23 -1 26 Z" fill="#3A86E6"/><path d="M14 16 Q20 19 27 16 L25 26 Q19 29 12 26 Z" fill="#F4C22A"/></svg>
<div class="t" style="top:1886.54px;font-size:27px;line-height:27px;color:#FFFFFF;font-weight:bold;left:55px;font-style:italic;text-shadow:1px 1px 2px rgba(0,0,0,.5);letter-spacing:0.5px;">start</div>
<div class="a" style="left:171.0px;top:1882px;width:254px;height:38px;background:linear-gradient(#4D90F8 0px,#3C81F3 4px,#3A7EF0 30px,#3574E6 36px);border-radius:4px 4px 0 0;border:1px solid #2A63D6;border-bottom:none;box-shadow:inset 1px 1px 0 rgba(255,255,255,.25);"></div>
<div class="a" style="left:186.0px;top:1894px;width:24px;height:17px;background:#000;border:1px solid #8A8A8A;border-top:3px solid #3A6EA5;"></div>
<div class="t" style="left:188.0px;top:1897px;font-size:10px;line-height:10px;color:#fff;font-weight:bold;font-family:'Liberation Mono'">C:\</div>
<div class="t" style="top:1892.01px;font-size:17px;line-height:17px;color:#FFFFFF;left:217.0px;">IAW Logger Server</div>
<div class="a" style="left:427.3px;top:1882px;width:254px;height:38px;background:linear-gradient(#4D90F8 0px,#3C81F3 4px,#3A7EF0 30px,#3574E6 36px);border-radius:4px 4px 0 0;border:1px solid #2A63D6;border-bottom:none;box-shadow:inset 1px 1px 0 rgba(255,255,255,.25);"></div>
<div class="a" style="left:443.3px;top:1889px;width:23px;height:23px;background:#F2EBC8;border:1px solid #222;box-shadow:2px 2px 0 #20306A;"></div>
<svg style="left:440.3px;top:1889px" width="28" height="24"><path d="M3 4h4M3 8h4M3 12h4M3 16h4M3 20h4" stroke="#222" stroke-width="1.5"/><g fill="#6A5AB0"><rect x="10" y="5" width="3" height="3"/><rect x="16" y="5" width="3" height="3"/><rect x="13" y="9" width="3" height="3"/><rect x="19" y="9" width="3" height="3"/><rect x="10" y="13" width="3" height="3"/><rect x="16" y="13" width="3" height="3"/><rect x="13" y="17" width="3" height="3"/></g><g fill="#D0A030"><rect x="19" y="13" width="3" height="3"/><rect x="10" y="17" width="3" height="3"/></g></svg>
<div class="t" style="top:1892.01px;font-size:17px;line-height:17px;color:#FFFFFF;left:473.3px;">Runtime App</div>
<div class="a" style="left:683.6px;top:1882px;width:254px;height:38px;background:linear-gradient(#4D90F8 0px,#3C81F3 4px,#3A7EF0 30px,#3574E6 36px);border-radius:4px 4px 0 0;border:1px solid #2A63D6;border-bottom:none;box-shadow:inset 1px 1px 0 rgba(255,255,255,.25);"></div>
<div class="a" style="left:699.6px;top:1889px;width:23px;height:23px;background:#F2EBC8;border:1px solid #222;box-shadow:2px 2px 0 #20306A;"></div>
<svg style="left:696.6px;top:1889px" width="28" height="24"><path d="M3 4h4M3 8h4M3 12h4M3 16h4M3 20h4" stroke="#222" stroke-width="1.5"/><g fill="#6A5AB0"><rect x="10" y="5" width="3" height="3"/><rect x="16" y="5" width="3" height="3"/><rect x="13" y="9" width="3" height="3"/><rect x="19" y="9" width="3" height="3"/><rect x="10" y="13" width="3" height="3"/><rect x="16" y="13" width="3" height="3"/><rect x="13" y="17" width="3" height="3"/></g><g fill="#D0A030"><rect x="19" y="13" width="3" height="3"/><rect x="10" y="17" width="3" height="3"/></g></svg>
<div class="t" style="top:1892.01px;font-size:17px;line-height:17px;color:#FFFFFF;left:729.6px;">LocalHost (F:\Preclini...</div>
<div class="a" style="left:939.9000000000001px;top:1882px;width:254px;height:38px;background:linear-gradient(#4D90F8 0px,#3C81F3 4px,#3A7EF0 30px,#3574E6 36px);border-radius:4px 4px 0 0;border:1px solid #2A63D6;border-bottom:none;box-shadow:inset 1px 1px 0 rgba(255,255,255,.25);"></div>
<div class="a" style="left:955.9000000000001px;top:1889px;width:23px;height:23px;background:#F2EBC8;border:1px solid #222;box-shadow:2px 2px 0 #20306A;"></div>
<svg style="left:952.9000000000001px;top:1889px" width="28" height="24"><path d="M3 4h4M3 8h4M3 12h4M3 16h4M3 20h4" stroke="#222" stroke-width="1.5"/><g fill="#6A5AB0"><rect x="10" y="5" width="3" height="3"/><rect x="16" y="5" width="3" height="3"/><rect x="13" y="9" width="3" height="3"/><rect x="19" y="9" width="3" height="3"/><rect x="10" y="13" width="3" height="3"/><rect x="16" y="13" width="3" height="3"/><rect x="13" y="17" width="3" height="3"/></g><g fill="#D0A030"><rect x="19" y="13" width="3" height="3"/><rect x="10" y="17" width="3" height="3"/></g></svg>
<div class="t" style="top:1892.01px;font-size:17px;line-height:17px;color:#FFFFFF;left:985.9000000000001px;">Runtime App</div>
<div class="a" style="left:1196.2px;top:1882px;width:254px;height:38px;background:linear-gradient(#4D90F8 0px,#3C81F3 4px,#3A7EF0 30px,#3574E6 36px);border-radius:4px 4px 0 0;border:1px solid #2A63D6;border-bottom:none;box-shadow:inset 1px 1px 0 rgba(255,255,255,.25);"></div>
<div class="a" style="left:1211.2px;top:1894px;width:24px;height:17px;background:#000;border:1px solid #8A8A8A;border-top:3px solid #3A6EA5;"></div>
<div class="t" style="left:1213.2px;top:1897px;font-size:10px;line-height:10px;color:#fff;font-weight:bold;font-family:'Liberation Mono'">C:\</div>
<div class="t" style="top:1892.01px;font-size:17px;line-height:17px;color:#FFFFFF;left:1242.2px;">cmd.exe /c &nbsp;""C:\Prog...</div>
<div class="a" style="left:1452.5px;top:1882px;width:254px;height:38px;background:linear-gradient(#4D90F8 0px,#3C81F3 4px,#3A7EF0 30px,#3574E6 36px);border-radius:4px 4px 0 0;border:1px solid #2A63D6;border-bottom:none;box-shadow:inset 1px 1px 0 rgba(255,255,255,.25);"></div>
<div class="a" style="left:1467.5px;top:1894px;width:24px;height:17px;background:#000;border:1px solid #8A8A8A;border-top:3px solid #3A6EA5;"></div>
<div class="t" style="left:1469.5px;top:1897px;font-size:10px;line-height:10px;color:#fff;font-weight:bold;font-family:'Liberation Mono'">C:\</div>
<div class="t" style="top:1892.01px;font-size:17px;line-height:17px;color:#FFFFFF;left:1498.5px;">cmd.exe /c &nbsp;""C:\Prog...</div>
<div class="a" style="left:1708.8000000000002px;top:1882px;width:254px;height:38px;background:linear-gradient(#4D90F8 0px,#3C81F3 4px,#3A7EF0 30px,#3574E6 36px);border-radius:4px 4px 0 0;border:1px solid #2A63D6;border-bottom:none;box-shadow:inset 1px 1px 0 rgba(255,255,255,.25);"></div>
<svg style="left:1723.8000000000002px;top:1890px" width="26" height="26"><circle cx="13" cy="13" r="11" fill="#2A2C8A" stroke="#DDE3F7" stroke-width="2"/><text x="14" y="20" font-size="8" fill="#fff" font-family="Liberation Sans">2</text></svg>
<div class="t" style="top:1892.01px;font-size:17px;line-height:17px;color:#FFFFFF;left:1754.8000000000002px;">IAW - Untitled</div>
<div class="a" style="left:2730px;top:1877px;width:342px;height:43px;background:linear-gradient(#1AA5F5 0px,#0E8EEA 4px,#0D8CE8 34px,#0A72D6 43px);border-left:1px solid #0F5DBF;box-shadow:inset 2px 0 2px rgba(255,255,255,.25);"></div>
<svg style="left:2744px;top:1886px" width="240" height="30"><circle cx="15" cy="14" r="11" fill="#3B2F9E" stroke="#E6E8F6" stroke-width="2.2"/><path d="M15 3 A11 11 0 0 1 15 25 A6 11 0 0 0 15 3Z" fill="#6A5FC8"/><rect x="39" y="2" width="12" height="12" fill="#22306E" stroke="#6F86C4" stroke-width="1"/><rect x="33" y="7" width="12" height="12" fill="#2E4A96" stroke="#8FA6DA" stroke-width="1"/><rect x="33" y="20" width="10" height="3" fill="#E6ECF6"/><circle cx="52" cy="22" r="3.2" fill="#F0D040"/><rect x="67" y="2" width="12" height="12" fill="#22306E" stroke="#6F86C4" stroke-width="1"/><rect x="61" y="7" width="12" height="12" fill="#2E4A96" stroke="#8FA6DA" stroke-width="1"/><rect x="61" y="20" width="10" height="3" fill="#E6ECF6"/><path d="M73 16 L82 26 M82 16 L73 26" stroke="#E02828" stroke-width="3"/><rect x="96" y="2" width="12" height="12" fill="#22306E" stroke="#6F86C4" stroke-width="1"/><rect x="90" y="7" width="12" height="12" fill="#2E4A96" stroke="#8FA6DA" stroke-width="1"/><rect x="90" y="20" width="10" height="3" fill="#E6ECF6"/><path d="M102 16 L111 26 M111 16 L102 26" stroke="#E02828" stroke-width="3"/><circle cx="127" cy="12" r="7" fill="#6E6670" stroke="#C9C2CC" stroke-width="1.5"/><circle cx="134" cy="19" r="5.5" fill="#E25A4A" stroke="#fff" stroke-width="1.2"/><path d="M131 16 L137 22" stroke="#fff" stroke-width="1.4"/><rect x="146" y="2" width="26" height="25" fill="#fff" stroke="#1A2A5A" stroke-width="1.2"/><text x="147.5" y="23" font-size="21" font-weight="bold" fill="#1A9A1A" font-family="Liberation Sans">V</text><text x="160" y="24" font-size="14" fill="#D03030" font-family="Liberation Sans">c</text><path d="M178 10 L183 10 L191 3 L191 25 L183 18 L178 18 Z" fill="#E8603A" stroke="#5A1A0A" stroke-width="1"/><path d="M194 7 Q199 14 194 21" stroke="#1A2A6A" stroke-width="2.4" fill="none"/><rect x="205" y="4" width="25" height="21" fill="#7AC043" opacity=".85"/><path d="M207 14 Q217 5 229 11 L229 17 Q217 23 207 14 Z" fill="none" stroke="#D8F0B0" stroke-width="1.5"/></svg>
<div class="t" style="top:1893.31px;font-size:17px;line-height:17px;color:#FFFFFF;left:2989px;">4:22 PM</div>
</body></html>
